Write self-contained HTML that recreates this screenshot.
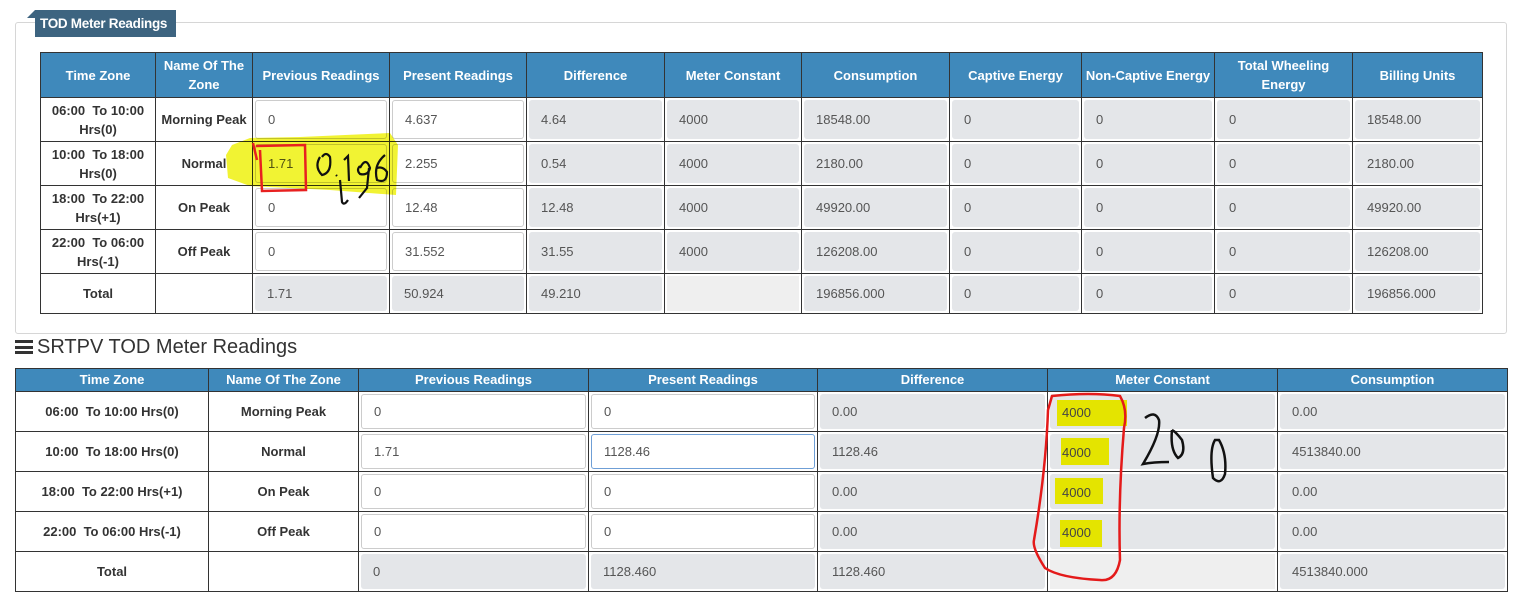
<!DOCTYPE html>
<html><head><meta charset="utf-8"><style>
*{box-sizing:border-box;margin:0;padding:0}
body{width:1536px;height:611px;background:#fff;font-family:"Liberation Sans",sans-serif;position:relative;overflow:hidden;color:#333}
.fs{position:absolute;left:15px;top:22px;width:1492px;height:312px;border:1px solid #d6d6d6;border-radius:3px}
.lg{position:absolute;left:35px;top:10px;width:141px;height:27px;background:#3d6480;color:#fff;font-weight:bold;font-size:13.5px;line-height:27px;padding-left:5px;white-space:nowrap;letter-spacing:-0.3px}
.tri{position:absolute;left:27px;top:10px;width:0;height:0;border-left:8px solid transparent;border-bottom:8px solid #3d6480}
table{position:absolute;border-collapse:collapse;table-layout:fixed}
td,th{border:1px solid #333;padding:2px;font-size:13px}
th{background:#3f89bb;color:#fff;font-weight:bold;text-align:center;line-height:19px}
td.l{font-weight:bold;text-align:center;color:#333;line-height:20px}
#t1 td.l{line-height:19px;padding:1px 2px}
.i,.r{height:35px;border-radius:3px;padding-left:12px;display:flex;align-items:center;color:#555;font-size:13px}
#t1 .i,#t1 .r{height:39px}
#t1 tr.tot .r,#t1 tr.tot .e{height:35px}
.i{border:1px solid #ccc;background:#fff}
.r{background:#e4e6e9}
.e{background:#efefef;height:35px}
#t2 th{height:23px;line-height:18px;padding:0}
.h2{position:absolute;left:15px;top:336px;font-size:20px;color:#333}
.h2 b{display:inline-block;width:18px;height:14px;border-top:3px solid #333;border-bottom:3px solid #333;position:relative;vertical-align:-1px;margin-right:4px}
.h2 b:after{content:"";position:absolute;left:0;right:0;top:2.5px;height:3px;background:#333}
</style></head><body>
<div class="fs"></div><div class="tri"></div><div class="lg">TOD Meter Readings</div>
<table id="t1" style="left:40px;top:52px;width:1442px">
<colgroup><col style="width:115px"><col style="width:97px"><col style="width:137px"><col style="width:137px"><col style="width:138px"><col style="width:137px"><col style="width:148px"><col style="width:132px"><col style="width:133px"><col style="width:138px"><col style="width:130px"></colgroup>
<tr><th style="height:45px">Time Zone</th><th>Name Of The Zone</th><th>Previous Readings</th><th>Present Readings</th><th>Difference</th><th>Meter Constant</th><th>Consumption</th><th>Captive Energy</th><th>Non-Captive Energy</th><th>Total Wheeling Energy</th><th>Billing Units</th></tr>
<tr><td class="l">06:00&nbsp; To 10:00 Hrs(0)</td><td class="l">Morning Peak</td><td><div class="i">0</div></td><td><div class="i">4.637</div></td><td><div class="r">4.64</div></td><td><div class="r">4000</div></td><td><div class="r">18548.00</div></td><td><div class="r">0</div></td><td><div class="r">0</div></td><td><div class="r">0</div></td><td><div class="r">18548.00</div></td></tr>
<tr><td class="l">10:00&nbsp; To 18:00 Hrs(0)</td><td class="l">Normal</td><td><div class="i">1.71</div></td><td><div class="i">2.255</div></td><td><div class="r">0.54</div></td><td><div class="r">4000</div></td><td><div class="r">2180.00</div></td><td><div class="r">0</div></td><td><div class="r">0</div></td><td><div class="r">0</div></td><td><div class="r">2180.00</div></td></tr>
<tr><td class="l">18:00&nbsp; To 22:00 Hrs(+1)</td><td class="l">On Peak</td><td><div class="i">0</div></td><td><div class="i">12.48</div></td><td><div class="r">12.48</div></td><td><div class="r">4000</div></td><td><div class="r">49920.00</div></td><td><div class="r">0</div></td><td><div class="r">0</div></td><td><div class="r">0</div></td><td><div class="r">49920.00</div></td></tr>
<tr><td class="l">22:00&nbsp; To 06:00 Hrs(-1)</td><td class="l">Off Peak</td><td><div class="i">0</div></td><td><div class="i">31.552</div></td><td><div class="r">31.55</div></td><td><div class="r">4000</div></td><td><div class="r">126208.00</div></td><td><div class="r">0</div></td><td><div class="r">0</div></td><td><div class="r">0</div></td><td><div class="r">126208.00</div></td></tr>
<tr class="tot"><td class="l">Total</td><td></td><td><div class="r">1.71</div></td><td><div class="r">50.924</div></td><td><div class="r">49.210</div></td><td><div class="e"></div></td><td><div class="r">196856.000</div></td><td><div class="r">0</div></td><td><div class="r">0</div></td><td><div class="r">0</div></td><td><div class="r">196856.000</div></td></tr>
</table>
<div class="h2"><b></b>SRTPV TOD Meter Readings</div>
<table id="t2" style="left:15px;top:368px;width:1492px">
<colgroup><col style="width:193px"><col style="width:150px"><col style="width:230px"><col style="width:229px"><col style="width:230px"><col style="width:230px"><col style="width:230px"></colgroup>
<tr><th>Time Zone</th><th>Name Of The Zone</th><th>Previous Readings</th><th>Present Readings</th><th>Difference</th><th>Meter Constant</th><th>Consumption</th></tr>
<tr><td class="l">06:00&nbsp; To 10:00 Hrs(0)</td><td class="l">Morning Peak</td><td><div class="i">0</div></td><td><div class="i">0</div></td><td><div class="r">0.00</div></td><td><div class="r">4000</div></td><td><div class="r">0.00</div></td></tr>
<tr><td class="l">10:00&nbsp; To 18:00 Hrs(0)</td><td class="l">Normal</td><td><div class="i">1.71</div></td><td><div class="i" style="border-color:#6f9fd6">1128.46</div></td><td><div class="r">1128.46</div></td><td><div class="r">4000</div></td><td><div class="r">4513840.00</div></td></tr>
<tr><td class="l">18:00&nbsp; To 22:00 Hrs(+1)</td><td class="l">On Peak</td><td><div class="i">0</div></td><td><div class="i">0</div></td><td><div class="r">0.00</div></td><td><div class="r">4000</div></td><td><div class="r">0.00</div></td></tr>
<tr><td class="l">22:00&nbsp; To 06:00 Hrs(-1)</td><td class="l">Off Peak</td><td><div class="i">0</div></td><td><div class="i">0</div></td><td><div class="r">0.00</div></td><td><div class="r">4000</div></td><td><div class="r">0.00</div></td></tr>
<tr><td class="l">Total</td><td></td><td><div class="r">0</div></td><td><div class="r">1128.460</div></td><td><div class="r">1128.460</div></td><td><div class="e"></div></td><td><div class="r">4513840.000</div></td></tr>
</table>
<svg style="position:absolute;left:0;top:0" width="1536" height="611">
<path d="M232 145 L250 138 L300 137 L390 133 L398 145 L396 195 L330 190 L250 186 L228 178 L226 155 Z" fill="#eef000" opacity="0.8" style="mix-blend-mode:multiply"/>
<path d="M256 146 L305 145 L306 190 L262 191 L260 150 M253 143 L257 160" fill="none" stroke="#e82020" stroke-width="2.5"/>
<path d="M320 157 q-6 10 2 18 q10 -2 8 -18 q-4 -6 -8 0 M336 175 l1 1 M344 160 l4 -4 l1 25 M360 168 q6 -12 10 0 q-2 8 -10 6 q-4 -4 0 -8 M369 168 l-2 20 l-8 10 M385 155 q-12 10 -8 25 q10 4 10 -8 q-4 -6 -10 -4 M340 180 l2 22 q2 4 6 -2" fill="none" stroke="#111" stroke-width="2.2"/>
<rect x="1057" y="400" width="70" height="26" fill="#e4e400"/>
<rect x="1061" y="438" width="48" height="27" fill="#e4e400"/>
<rect x="1055" y="478" width="48" height="26" fill="#e4e400"/>
<rect x="1060" y="520" width="42" height="27" fill="#e4e400"/>
<text x="1062" y="417" font-size="13" fill="#444">4000</text>
<text x="1062" y="457" font-size="13" fill="#444">4000</text>
<text x="1062" y="497" font-size="13" fill="#444">4000</text>
<text x="1062" y="537" font-size="13" fill="#444">4000</text>
<path d="M1052 396 Q1090 392 1120 396 Q1128 410 1124 428 Q1118 500 1120 560 Q1116 582 1100 580 Q1060 578 1045 568 Q1032 548 1034 540 Q1046 470 1048 410 Z" fill="none" stroke="#e41a1a" stroke-width="2.5"/>
<path d="M1145 418 q10 -8 14 2 q2 14 -16 44 q10 -2 26 -2 M1172 430 q-2 20 6 28 q8 -4 4 -18 q-6 -8 -10 -10 M1215 440 q-6 10 -2 38 q8 8 12 -4 q2 -20 -6 -34 Z" fill="none" stroke="#111" stroke-width="2.5"/>
</svg>
</body></html>
